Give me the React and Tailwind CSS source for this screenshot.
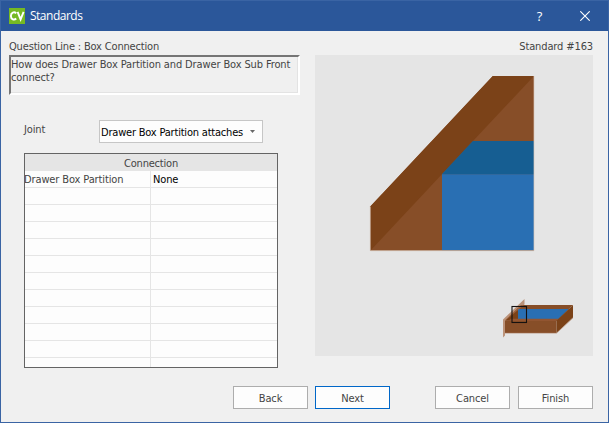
const textFont = "font-['DejaVu_Sans_Condensed','DejaVu_Sans',sans-serif] [font-stretch:condensed]";
const titleFont = "font-['Open_Sans','Noto_Sans',sans-serif] [font-stretch:normal]";

function TitleBar() {
  return (
    <header className={`flex h-[30px] shrink-0 items-center bg-[#2b579a] pl-2 text-white ${titleFont}`}>
      <svg className="h-4 w-4" viewBox="0 0 16 16">
        <rect width="16" height="16" fill="#76b923" />
        <path d="M7.2 5.3C5.2 3.3 1.9 4.4 1.9 7.9S5.2 12.5 7.2 10.5M8.6 3.8L11.6 11.4L14.6 3.8" fill="none" stroke="#fff" strokeWidth="1.9" />
      </svg>
      <h1 className="ml-[5px] grow text-[12px] leading-4 tracking-[-0.5px]">Standards</h1>
      <button className="w-[45px] text-center text-[13px] leading-4">?</button>
      <button className="flex w-[46px] justify-center" aria-label="Close">
        <svg className="h-[10px] w-[10px]" viewBox="0 0 10 10">
          <path d="M.3 .3L9.7 9.7M9.7 .3L.3 9.7" stroke="#fff" strokeWidth="1.1" />
        </svg>
      </button>
    </header>
  );
}

function Connections() {
  return (
    <div className="mt-[10px] ml-[15px] h-[215px] w-[254px] overflow-hidden border border-[#646464] bg-[#fdfdfd]">
      <div className="h-[17px] bg-[#e5e5e5] text-center leading-[19px] tracking-[-0.2px]">Connection</div>
      {Array.from({ length: 12 }, (_, i) => (
        <div key={i} className="flex h-[17px] border-b border-[#e5e5e5] leading-[17px] whitespace-nowrap">
          <div className="w-[126px] border-r border-[#e5e5e5]"><span className="-ml-px">{i === 0 ? "Drawer Box Partition" : ""}</span></div>
          <div className="pl-[2px] text-black">{i === 0 ? "None" : ""}</div>
        </div>
      ))}
    </div>
  );
}

function Illustration() {
  return (
    <svg className="block h-[301px] w-[278px] bg-[#e5e5e5]" viewBox="315 55 278 301">
      <path d="M370.3 206.5L492.8 76H534V250.7H370.3Z" fill="#874e28" />
      <path d="M370.3 206.5L492.8 76H534L370.3 250.7Z" fill="#7b4218" />
      <path d="M442 174L472.8 141H534V174.5H442Z" fill="#165e92" />
      <path d="M442 174.3H534V250.2H442Z" fill="#296fb3" />
      <path d="M370.3 206.5V250.7H534V76" fill="none" stroke="#d9c5b8" strokeWidth=".7" />
      <path d="M505 320.5L521 305H573L556.5 320.5Z" fill="#874e28" />
      <path d="M518 309H569L558.5 319H518Z" fill="#296fb3" />
      <path d="M505 320.5L518 308V319L514 321Z" fill="#7b4218" />
      <path d="M505 320.5H556.5V333H505Z" fill="#874e28" />
      <path d="M508 321L511 318.8H558.5L556.5 321Z" fill="#925531" />
      <path d="M556.5 320.5L573 305V317.5L556.5 333Z" fill="#7b4218" />
      <path d="M503 319.5L524.5 299V304.5L505 321V335.5L503 337.5Z" fill="#a96f4b" fillOpacity=".7" />
      <path d="M505 333.2H556.5L573 318" fill="none" stroke="#b28c73" strokeWidth=".6" />
      <rect x="512" y="306.5" width="14.5" height="16" fill="none" stroke="#15110f" strokeWidth="1.1" />
    </svg>
  );
}

function Button({ label, active = false }) {
  return (
    <button className={`h-[23px] w-[75px] border bg-[#fdfdfd] text-center leading-[23px] ${active ? "border-[#0067c8]" : "border-[#adadad]"}`}>
      {label}
    </button>
  );
}

export default function App() {
  return (
    <div className={`flex h-[423px] w-[609px] flex-col overflow-hidden border border-[#3a64a4] bg-[#f0f0f0] text-[11px] tracking-[-0.12px] text-[#444] ${textFont}`}>
      <TitleBar />
      <main className="flex justify-between pr-[15px] pl-2">
        <section className="w-[292px] pt-[7px]">
          <div className="h-[17px] leading-[18px] tracking-[-0.17px]">Question Line : Box Connection</div>
          <div className="h-10 w-[291px] border-2 border-t-[#757575] border-r-white border-b-white border-l-[#757575] pt-px leading-[13px] whitespace-nowrap shadow-[inset_-1px_-1px_#e3e3e3]">
            How does Drawer Box Partition and Drawer Box Sub Front<br />connect?
          </div>
          <div className="mt-[25px] flex h-[23px] pl-[15px]">
            <label className="w-[75px] leading-[19px]">Joint</label>
            <div className="flex w-[164px] items-center border border-[#c6c6c6] bg-[#fdfdfd] pl-px text-black">
              <div className="w-[144px] pt-[2px] leading-[19px] tracking-[-0.2px] whitespace-nowrap">Drawer Box Partition attaches</div>
              <svg className="ml-[5px] h-[3px] w-[5px]" viewBox="0 0 5 3"><path d="M0 0H5L2.5 3Z" fill="#686868" /></svg>
            </div>
          </div>
          <Connections />
        </section>
        <section className="w-[278px] pt-[7px]">
          <div className="h-[17px] text-right leading-[18px]">Standard #163</div>
          <Illustration />
        </section>
      </main>
      <footer className="mt-[18px] flex pl-[232px]">
        <Button label="Back" />
        <div className="ml-[7px]"><Button label="Next" active /></div>
        <div className="ml-[45px] flex gap-2"><Button label="Cancel" /><Button label="Finish" /></div>
      </footer>
    </div>
  );
}
